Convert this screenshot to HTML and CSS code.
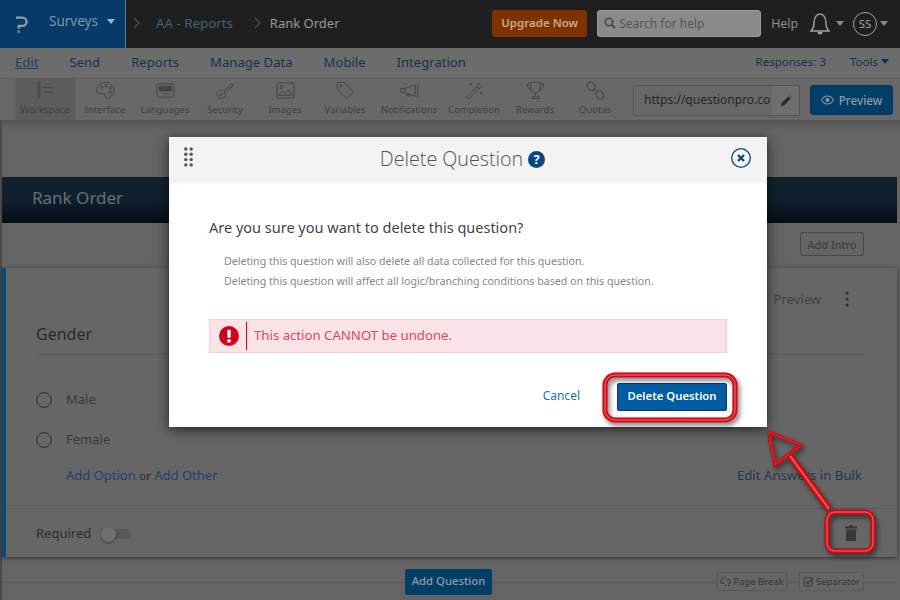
FILE: index.html
```html
<!DOCTYPE html>
<html lang="en">
<head>
<meta charset="utf-8">
<title>Delete Question</title>
<link rel="stylesheet" href="styles.css">
</head>
<body>
<div class="page">
  <header class="topbar">
    <div class="brand">
      <svg class="logo" viewBox="0 0 14 20"><path d="M1 2h7a4.500 4.500 0 0 1 0 9H4v3" fill="none" stroke="#8f9ba5" stroke-width="2.400"/><rect x="2.800" y="16" width="2.400" height="2.400" fill="#8f9ba5"/></svg>
      <span class="brand-name">Surveys</span>
      <span class="caret caret-brand"></span>
    </div>
    <nav class="crumbs">
      <svg class="chev" viewBox="0 0 8 12"><path d="M1 1l5 5-5 5" fill="none" stroke="#4f4f4f" stroke-width="1.300"/></svg>
      <span class="crumb-link">AA - Reports</span>
      <svg class="chev chev-2" viewBox="0 0 8 12"><path d="M1 1l5 5-5 5" fill="none" stroke="#4f4f4f" stroke-width="1.300"/></svg>
      <span class="crumb-current">Rank Order</span>
    </nav>
    <div class="top-actions">
      <button class="upgrade">Upgrade Now</button>
      <div class="search">
        <svg class="search-icon" viewBox="0 0 12 12"><circle cx="5" cy="5" r="3.700" fill="none" stroke="#484848" stroke-width="1.600"/><path d="M7.800 7.800L11 11" stroke="#484848" stroke-width="2"/></svg>
        <span>Search for help</span>
      </div>
      <span class="help">Help</span>
      <svg class="bell" viewBox="0 0 22 25"><path d="M2 20c2-2 3-4 3-8 0-5 2.500-9 6-9s6 4 6 9c0 4 1 6 3 8z" fill="none" stroke="#a0a0a0" stroke-width="1.400"/><path d="M8.500 21a2.500 2.500 0 0 0 5 0z" fill="#a0a0a0"/></svg>
      <span class="caret caret-grey"></span>
      <span class="avatar">SS</span>
      <span class="caret caret-grey caret-last"></span>
    </div>
  </header>

  <div class="navrow">
    <a class="nav-item nav-active">Edit</a>
    <a class="nav-item">Send</a>
    <a class="nav-item">Reports</a>
    <a class="nav-item">Manage Data</a>
    <a class="nav-item">Mobile</a>
    <a class="nav-item">Integration</a>
    <span class="responses">Responses: 3</span>
    <span class="tools">Tools<span class="caret caret-navy"></span></span>
  </div>

  <div class="toolbar">
    <div class="tool tool-active">
      <svg class="tool-icon" viewBox="0 0 20 20"><path d="M2 1h2v14l-1 3-1-3zM7 7h11M7 12h11"/></svg><span>Workspace</span>
    </div>
    <div class="tool">
      <svg class="tool-icon" viewBox="0 0 20 20"><path d="M10 1.500c5 0 9 3.500 9 8s-3.500 8.500-7 8.500c-2.500 0-2-2-2.500-3.500S7 13 5 13.500 1 12.500 1 9.500C1 5 5 1.500 10 1.500z"/><circle cx="6" cy="6.500" r="1.300"/><circle cx="10.500" cy="5" r="1.300"/><circle cx="15" cy="7" r="1.300"/><circle cx="15" cy="12" r="1.300"/></svg><span>Interface</span>
    </div>
    <div class="tool">
      <svg class="tool-icon" viewBox="0 0 20 20"><rect x="1" y="3" width="18" height="14" rx="2"/><path class="tool-fill" d="M3.500 5.500h13v5h-13z"/><path d="M7 13.500h6"/></svg><span>Languages</span>
    </div>
    <div class="tool">
      <svg class="tool-icon" viewBox="0 0 20 20"><circle cx="5.500" cy="14" r="4.500"/><circle cx="5" cy="14.500" r="1.200"/><path d="M8.500 10.500L16 3l2 1-1 2-1 0 0 1.500-1.500 0-4 4.500"/></svg><span>Security</span>
    </div>
    <div class="tool">
      <svg class="tool-icon" viewBox="0 0 20 20"><rect x="1" y="2" width="18" height="16" rx="1"/><circle cx="6" cy="6.500" r="1.500"/><path d="M3 15l4-4 3 2 3-4 4 6z"/></svg><span>Images</span>
    </div>
    <div class="tool">
      <svg class="tool-icon" viewBox="0 0 20 20"><path d="M1.500 1.500h7l10 10-7 7-10-10z"/><circle cx="5" cy="5" r="1.300"/></svg><span>Variables</span>
    </div>
    <div class="tool tool-wide">
      <svg class="tool-icon" viewBox="0 0 20 20"><path d="M1 8h4l11-4v12L5 12H1zM5 8v4M18.500 3v14M7 13l1 3h2l-1-2.500"/></svg><span>Notifications</span>
    </div>
    <div class="tool tool-mid">
      <svg class="tool-icon" viewBox="0 0 20 20"><path d="M1.500 17l11-11 2 2-11 11zM14 2l4 4-2.500 2L12 4.500zM6 2v3M4.500 3.500h3M17 11v3M15.500 12.500h3"/></svg><span>Completion</span>
    </div>
    <div class="tool">
      <svg class="tool-icon" viewBox="0 0 20 20"><path d="M5 1.500h10v6c0 3-2 5-5 5s-5-2-5-5zM5 3H1.500c0 3.500 1.500 6 4.500 6.500M15 3h3.500c0 3.500-1.500 6-4.500 6.500M10 12.500V16M6 18.500c0-2 2-2.500 4-2.500s4 .5 4 2.500z"/></svg><span>Rewards</span>
    </div>
    <div class="tool">
      <svg class="tool-icon" viewBox="0 0 20 20"><rect x="2" y="1" width="7" height="9" rx="3" transform="rotate(-35 5.500 5.500)"/><rect x="11" y="10" width="7" height="9" rx="3" transform="rotate(-35 14.500 14.500)"/><path d="M8 8l4 4"/></svg><span>Quotas</span>
    </div>
    <div class="url-box">
      <span class="url-text">https://questionpro.co</span>
      <span class="url-edit"><svg viewBox="0 0 12 12"><path d="M1 11l.6-3L8 1.600 10.400 4 4 10.400zM8.800 .8l.8-.4 2 2-.4.8z" fill="#2a2a2a"/></svg></span>
    </div>
    <button class="preview-btn">
      <svg viewBox="0 0 14 10"><path d="M.6 5C2.200 2 4.500.7 7 .7S11.800 2 13.400 5C11.800 8 9.500 9.300 7 9.300S2.200 8 .6 5z" fill="none" stroke="#8f9aa4" stroke-width="1.100"/><circle cx="7" cy="5" r="2.200" fill="#8f9aa4"/></svg>
      Preview
    </button>
  </div>

  <main class="main">
    <div class="section-bar">Rank Order</div>
    <div class="intro-row"><button class="ghost-btn">Add Intro</button></div>
    <section class="card">
      <div class="card-tools">
        <span class="card-preview">Preview</span>
        <svg class="dots" viewBox="0 0 4 16"><circle cx="2" cy="2" r="1.500"/><circle cx="2" cy="8" r="1.500"/><circle cx="2" cy="14" r="1.500"/></svg>
      </div>
      <h2 class="q-title">Gender</h2>
      <div class="q-options">
        <label class="option"><span class="radio"></span>Male</label>
        <label class="option"><span class="radio"></span>Female</label>
        <div class="add-row">
          <span><a class="add-link">Add Option</a> <span class="or">or</span> <a class="add-link">Add Other</a></span>
          <a class="bulk">Edit Answers in Bulk</a>
        </div>
      </div>
      <div class="q-footer">
        <span class="req">Required</span>
        <span class="toggle"><span class="knob"></span></span>
        <svg class="trash" viewBox="0 0 12 16"><path d="M4 0h4v1.500h4V3.500H0V1.500h4zM1 4.500h10V16H1z" fill="#383838"/></svg>
      </div>
    </section>
    <div class="add-bar">
      <button class="add-question">Add Question</button>
      <div class="break-btns">
        <button class="small-btn small-break">
          <svg viewBox="0 0 12 12"><path d="M3 3L1.500 4.500a2 2 0 0 0 3 3M9 9l1.500-1.500a2 2 0 0 0-3-3M2 1l1 1M10 11l-1-1M6 1v2M6 9v2" fill="none" stroke="#3a3a3a" stroke-width="1.100"/></svg>
          Page Break
        </button>
        <button class="small-btn small-sep">
          <svg viewBox="0 0 12 12"><rect x="1" y="2" width="9" height="9" rx="1.500" fill="none" stroke="#3a3a3a" stroke-width="1.100"/><path d="M3 6l2.500 2.500L11 2" fill="none" stroke="#3a3a3a" stroke-width="1.500"/></svg>
          Separator
        </button>
      </div>
    </div>
  </main>

  <div class="modal" role="dialog">
    <div class="modal-head">
      <svg class="grip" viewBox="0 0 9 20"><circle cx="1.800" cy="2" r="1.700"/><circle cx="7.200" cy="2" r="1.700"/><circle cx="1.800" cy="7.300" r="1.700"/><circle cx="7.200" cy="7.300" r="1.700"/><circle cx="1.800" cy="12.600" r="1.700"/><circle cx="7.200" cy="12.600" r="1.700"/><circle cx="1.800" cy="17.900" r="1.700"/><circle cx="7.200" cy="17.900" r="1.700"/></svg>
      <h1 class="modal-title">Delete Question</h1>
      <span class="help-badge">?</span>
      <svg class="close" viewBox="0 0 20 20"><circle cx="10" cy="10" r="9.300" fill="none" stroke="#05478a" stroke-width="1.300"/><path d="M7 7l6 6M13 7l-6 6" stroke="#05478a" stroke-width="2.300"/></svg>
    </div>
    <div class="modal-body">
      <p class="ask">Are you sure you want to delete this question?</p>
      <p class="note">Deleting this question will also delete all data collected for this question.</p>
      <p class="note">Deleting this question will affect all logic/branching conditions based on this question.</p>
      <div class="alert">
        <span class="alert-icon">
          <svg viewBox="0 0 20 20"><circle cx="10" cy="10" r="10" fill="#d0021b"/><rect x="8.300" y="3.800" width="3.400" height="8" rx="1" fill="#fff"/><rect x="8.300" y="13.200" width="3.400" height="3.200" rx="1" fill="#fff"/></svg>
        </span>
        <span class="alert-text">This action CANNOT be undone.</span>
      </div>
      <div class="modal-actions">
        <a class="cancel">Cancel</a>
        <button class="danger">Delete Question</button>
      </div>
    </div>
  </div>

  <svg class="annotations" viewBox="0 0 900 600">
    <defs>
      <filter id="shade" x="-20%" y="-20%" width="140%" height="140%"><feDropShadow dx="2" dy="3" stdDeviation="2.500" flood-color="#000" flood-opacity=".55"/></filter>
    </defs>
    <g filter="url(#shade)" fill="none" stroke-linejoin="round">
      <g>
        <rect x="605" y="375" width="130" height="45" rx="10" stroke="#a80d12" stroke-width="5"/>
        <rect x="605" y="375" width="130" height="45" rx="10" stroke="#e8141c" stroke-width="3"/>
        <rect x="605" y="375" width="130" height="45" rx="10" stroke="#ff8a8a" stroke-width=".6"/>
      </g>
      <g>
        <rect x="827" y="512" width="46" height="39" rx="8" stroke="#a80d12" stroke-width="5"/>
        <rect x="827" y="512" width="46" height="39" rx="8" stroke="#e8141c" stroke-width="3"/>
        <rect x="827" y="512" width="46" height="39" rx="8" stroke="#ff8a8a" stroke-width=".6"/>
      </g>
      <g>
        <path d="M790 456L829 509" stroke="#a80d12" stroke-width="6.500"/>
        <path d="M790 456L829 509" stroke="#e8141c" stroke-width="4.500"/>
        <path d="M790 456L829 509" stroke="#ff9a9a" stroke-width="1"/>
        <path d="M769 432L801 445 775 465z" stroke="#a80d12" stroke-width="3.500"/>
        <path d="M769 432L801 445 775 465z" stroke="#e8141c" stroke-width="2"/>
      </g>
    </g>
  </svg>
</div>
</body>
</html>
```

FILE: styles.css
```css
* { box-sizing: border-box; }
html, body { margin: 0; padding: 0; }
body { font-family: "Noto Sans", "Open Sans", sans-serif; color: #333; }
button { font-family: inherit; cursor: pointer; }
p, h1, h2 { margin: 0; font-weight: 400; }

.page { position: relative; width: 900px; height: 600px; overflow: hidden; display: flex; flex-direction: column; background: #666; }

.topbar { height: 48px; flex: none; display: flex; align-items: center; background: #1f1f1f; }
.brand { width: 126px; height: 100%; display: flex; align-items: center; padding-left: 15px; background: #063a68; border-right: 1px solid #4f7ea6; }
.logo { width: 13px; height: 20px; margin: 2px 21px 0 0; }
.brand-name { margin-bottom: 6px; font-size: 13.500px; color: #7c98ae; }
.caret { display: inline-block; width: 0; height: 0; border-left: 4.500px solid transparent; border-right: 4.500px solid transparent; border-top: 5px solid #999; }
.caret-brand { margin: 0 0 6px 9px; border-top-color: #a6b4bf; }
.crumbs { display: flex; align-items: center; font-size: 13.300px; padding-left: 7px; margin-top: -2px; }
.chev { width: 8px; height: 12px; }
.chev-2 { margin-left: 21px; }
.crumb-link { margin-left: 15px; color: #3f6379; }
.crumb-current { margin-left: 8px; color: #9a9a92; font-size: 13px; }
.top-actions { margin-left: auto; display: flex; align-items: center; margin-top: -1px; }
.upgrade { width: 95px; height: 27px; padding: 0 0 2px; border: 0; border-radius: 3px; background: #7f3200; color: #c9a98f; font-size: 11.500px; font-weight: 600; }
.search { width: 164px; height: 27px; margin-left: 10px; display: flex; align-items: center; padding: 0 0 1px 6px; gap: 3px; background: #8a8a8a; border: 1px solid #9a9a9a; border-radius: 3px; color: #555; font-size: 12px; }
.search-icon { width: 12px; height: 12px; }
.help { margin-left: 10px; font-size: 12.300px; color: #8e8e8e; }
.bell { width: 22px; height: 25px; margin-left: 11px; }
.caret-grey { margin-left: 5px; border-top-color: #8a8a8a; }
.avatar { width: 24px; height: 24px; margin-left: 9px; display: flex; align-items: center; justify-content: center; border: 1px solid #a0a0a0; border-radius: 50%; color: #a0a0a0; font-size: 11.500px; }
.caret-last { margin-left: 3px; margin-right: 12px; }

.navrow { height: 31px; flex: none; display: flex; align-items: center; gap: 31px; padding: 0 11px 2px 15px; background: #6c6c6c; border-bottom: 1px solid #5c5c5c; font-size: 13.100px; color: #1c2e50; }
.nav-item { color: #1c2e50; }
.nav-active { color: #1c4065; text-decoration: underline; }
.responses { margin-left: auto; margin-bottom: 2px; font-size: 11.500px; }
.tools { margin: 0 0 2px -7px; font-size: 11.500px; display: flex; align-items: center; gap: 3px; }
.caret-navy { border-top-color: #1c2e50; }

.toolbar { height: 41px; flex: none; display: flex; align-items: stretch; padding-left: 15px; background: #686868; position: relative; z-index: 1; }
.tool { width: 60px; display: flex; flex-direction: column; align-items: center; justify-content: flex-end; padding-bottom: 4px; font-size: 9.500px; color: #3f3f3f; white-space: nowrap; }
.tool-wide { width: 68px; }
.tool-mid { width: 62px; }
.tool-active { background: #5c5c5c; }
.tool-icon { width: 19px; height: 19px; margin-bottom: 3px; fill: none; stroke: #454545; stroke-width: 1; }
.tool-fill { fill: #454545; }
.url-box { width: 167px; height: 31px; margin: 6px 0 0 8px; display: flex; border: 1px solid #555; border-radius: 2px; }
.url-text { width: 138px; padding-left: 10px; line-height: 27px; font-size: 12px; color: #262626; white-space: nowrap; }
.url-edit { flex: 1; display: flex; align-items: center; justify-content: center; background: #6f6f6f; }
.url-edit svg { width: 12px; height: 12px; }
.preview-btn { width: 83px; height: 30px; margin: 6px 0 0 10px; padding: 0 0 1px; display: flex; align-items: center; justify-content: center; gap: 5px; border: 1px solid #03365e; border-radius: 3px; background: #033e69; color: #8f9aa4; font-size: 11.700px; font-weight: 500; }
.preview-btn svg { width: 13px; height: 10px; }

.main { flex: 1; display: flex; flex-direction: column; border-left: 2px solid #4a4a4a; background: linear-gradient(#555 0, #646464 10px); padding-top: 57px; }
.section-bar { height: 46px; flex: none; display: flex; align-items: center; padding: 0 0 6px 30px; margin-right: 3px; background: linear-gradient(#14202e, #10202f 50%, #040d17); color: #6b6e70; font-size: 17px; }
.intro-row { height: 45px; flex: none; display: flex; justify-content: flex-end; align-items: flex-start; padding: 9px 36px 0 0; }
.ghost-btn { width: 64px; height: 24px; padding: 0; background: transparent; border: 1px solid #4a4a4a; border-radius: 2px; color: #3a3a3a; font-size: 11px; }

.card { height: 289px; flex: none; display: flex; flex-direction: column; margin-right: 3px; padding-left: 30px; background: #666; border-left: 4px solid #044a7d; box-shadow: 0 1px 4px rgba(0,0,0,.5); }
.card-tools { height: 20px; margin-top: 21px; display: flex; justify-content: flex-end; align-items: center; padding-right: 48px; font-size: 13px; color: #424242; }
.dots { width: 4px; height: 16px; margin-left: 24px; fill: #303030; }
.q-title { height: 33px; margin: 13px 33px 0 0; padding-top: 1px; border-bottom: 1px solid #5c5c5c; font-size: 16px; color: #2a2a2a; }
.q-options { flex: 1; padding: 24px 35px 0 0; }
.option { height: 40px; display: flex; align-items: center; font-size: 13px; color: #3a3a3a; }
.radio { width: 16px; height: 16px; margin-right: 14px; margin-top: 2px; border: 1px solid #2a2a2a; border-radius: 50%; }
.add-row { height: 32px; display: flex; align-items: center; justify-content: space-between; padding-left: 30px; font-size: 13px; }
.add-link { color: #243f70; }
.or { font-size: 11.500px; color: #2a2a2a; }
.bulk { color: #2b3644; font-size: 13.200px; }
.q-footer { height: 49px; flex: none; display: flex; align-items: center; margin-left: -30px; padding-left: 30px; border-top: 1px solid #5c5c5c; font-size: 13px; color: #2c2c2c; }
.toggle { position: relative; width: 24px; height: 10px; margin: 2px 0 0 16px; background: #585858; border-radius: 5px; }
.knob { position: absolute; left: -6px; top: -2.500px; width: 15px; height: 15px; border-radius: 50%; background: #707070; box-shadow: 0 1px 2px rgba(0,0,0,.4); }
.trash { width: 12px; height: 16px; margin-left: auto; margin-right: 40px; }
.add-bar { flex: 1; display: flex; align-items: flex-start; padding: 12px 33px 0 403px; margin-right: 3px; background: linear-gradient(#5a5a5a, #5a5a5a) 0 25px / 100% 1px no-repeat; }
.add-question { width: 87px; height: 26px; padding: 0 0 3px; border: 1px solid #033d68; border-radius: 2px; background: #033e69; color: #8f9aa4; font-size: 11.300px; font-weight: 500; }
.break-btns { margin-left: auto; margin-top: 3px; display: flex; gap: 12px; }
.small-btn { height: 19px; padding: 0; display: flex; align-items: center; justify-content: center; gap: 2px; background: #666; border: 1px solid #585858; border-radius: 2px; color: #353535; font-size: 9.500px; white-space: nowrap; }
.small-break { width: 70px; }
.small-sep { width: 65px; }
.small-btn svg { width: 11px; height: 11px; }

.modal { position: absolute; left: 169px; top: 137px; width: 598px; height: 290px; background: #fff; box-shadow: 0 3px 12px rgba(0,0,0,.65); }
.modal-head { position: relative; height: 46px; display: flex; align-items: center; justify-content: center; gap: 5px; padding-right: 11px; background: #f3f3f3; }
.modal-title { padding-bottom: 3px; font-family: "Open Sans", "Noto Sans", sans-serif; font-size: 19.700px; font-weight: 300; color: #50555c; }
.grip { position: absolute; left: 15px; top: 10px; width: 9px; height: 20px; fill: #555; }
.help-badge { width: 17px; height: 17px; display: flex; align-items: center; justify-content: center; margin-bottom: 1px; border-radius: 50%; background: #05478a; color: #fff; font-size: 13px; font-weight: 700; line-height: 1; }
.close { position: absolute; right: 16px; top: 11px; width: 20px; height: 20px; }
.modal-body { padding: 33px 40px 0; }
.ask { font-size: 14.500px; line-height: 22px; color: #3e4550; }
.note { padding-left: 15px; font-size: 10.650px; line-height: 20px; color: #85888d; }
.ask + .note { margin-top: 13px; }
.alert { height: 34px; margin-top: 28px; display: flex; align-items: center; background: #fae3e6; border: 1px solid #f5cdd3; }
.alert-icon { width: 37px; height: 28px; flex: none; display: flex; align-items: center; justify-content: center; padding-left: 1px; border-right: 1.500px solid #d0021b; }
.alert-icon svg { width: 20px; height: 20px; }
.alert-text { margin: 0 0 2px 7px; font-size: 13.200px; color: #d8476a; }
.modal-actions { height: 28px; margin-top: 30px; display: flex; justify-content: flex-end; align-items: center; gap: 37px; }
.cancel { padding-bottom: 3px; font-size: 12px; color: #2b6ea6; }
.danger { width: 110px; height: 28px; padding: 0 0 3px; border: 1px solid #043c66; border-radius: 2px; background: #005da4; color: #fff; font-size: 11.300px; font-weight: 600; }

.annotations { position: absolute; left: 0; top: 0; width: 900px; height: 600px; pointer-events: none; }
```
